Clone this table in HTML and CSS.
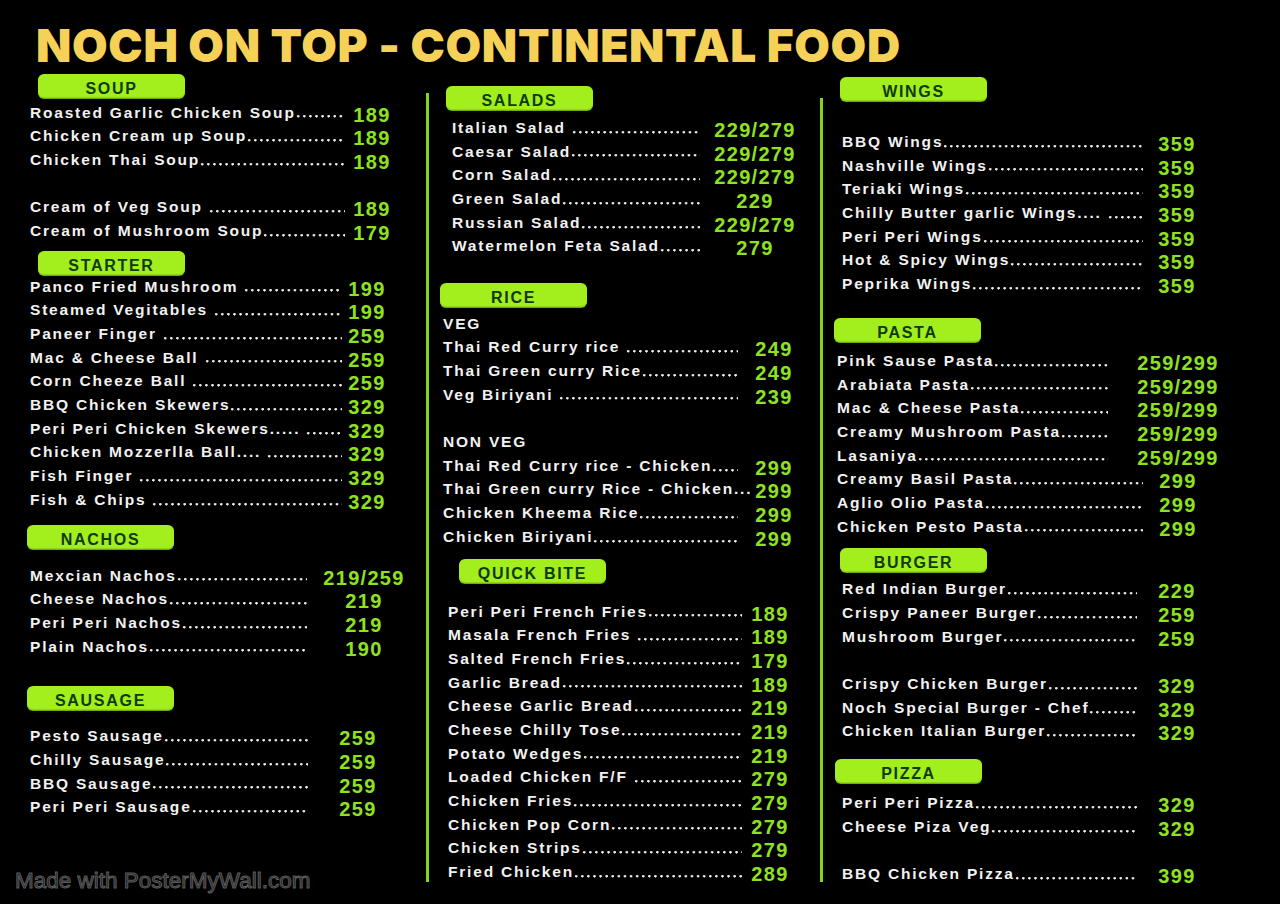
FILE: index.html
```html
<!DOCTYPE html>
<html lang="en">
<head>
<meta charset="utf-8">
<title>Noch On Top - Continental Food</title>
<link rel="stylesheet" href="styles.css">
</head>
<body>
<div class="poster">
  <h1 class="title">NOCH ON TOP - CONTINENTAL FOOD</h1>
  <div class="cols">
    <div class="col col1">
      <div class="pill p-soup">SOUP</div>
      <div class="sec s-soup">
        <div class="row"><span class="lead"><span class="nm">Roasted Garlic Chicken Soup</span><span class="dots"></span></span><span class="pr">189</span></div>
        <div class="row"><span class="lead"><span class="nm">Chicken Cream up Soup</span><span class="dots"></span></span><span class="pr">189</span></div>
        <div class="row"><span class="lead"><span class="nm">Chicken Thai Soup</span><span class="dots"></span></span><span class="pr">189</span></div>
        <div class="blank"></div>
        <div class="row"><span class="lead"><span class="nm">Cream of Veg Soup </span><span class="dots"></span></span><span class="pr">189</span></div>
        <div class="row"><span class="lead"><span class="nm">Cream of Mushroom Soup</span><span class="dots"></span></span><span class="pr">179</span></div>
      </div>
      <div class="pill p-starter">STARTER</div>
      <div class="sec s-starter">
        <div class="row"><span class="lead"><span class="nm">Panco Fried Mushroom </span><span class="dots"></span></span><span class="pr">199</span></div>
        <div class="row"><span class="lead"><span class="nm">Steamed Vegitables </span><span class="dots"></span></span><span class="pr">199</span></div>
        <div class="row"><span class="lead"><span class="nm">Paneer Finger </span><span class="dots"></span></span><span class="pr">259</span></div>
        <div class="row"><span class="lead"><span class="nm">Mac &amp; Cheese Ball </span><span class="dots"></span></span><span class="pr">259</span></div>
        <div class="row"><span class="lead"><span class="nm">Corn Cheeze Ball </span><span class="dots"></span></span><span class="pr">259</span></div>
        <div class="row"><span class="lead"><span class="nm">BBQ Chicken Skewers</span><span class="dots"></span></span><span class="pr">329</span></div>
        <div class="row"><span class="lead"><span class="nm">Peri Peri Chicken Skewers..... </span><span class="dots"></span></span><span class="pr">329</span></div>
        <div class="row"><span class="lead"><span class="nm">Chicken Mozzerlla Ball.... </span><span class="dots"></span></span><span class="pr">329</span></div>
        <div class="row"><span class="lead"><span class="nm">Fish Finger </span><span class="dots"></span></span><span class="pr">329</span></div>
        <div class="row"><span class="lead"><span class="nm">Fish &amp; Chips </span><span class="dots"></span></span><span class="pr">329</span></div>
      </div>
      <div class="pill p-nachos">NACHOS</div>
      <div class="sec s-nachos">
        <div class="row"><span class="lead"><span class="nm">Mexcian Nachos</span><span class="dots"></span></span><span class="pr">219/259</span></div>
        <div class="row"><span class="lead"><span class="nm">Cheese Nachos</span><span class="dots"></span></span><span class="pr">219</span></div>
        <div class="row"><span class="lead"><span class="nm">Peri Peri Nachos</span><span class="dots"></span></span><span class="pr">219</span></div>
        <div class="row"><span class="lead"><span class="nm">Plain Nachos</span><span class="dots"></span></span><span class="pr">190</span></div>
      </div>
      <div class="pill p-sausage">SAUSAGE</div>
      <div class="sec s-sausage">
        <div class="row"><span class="lead"><span class="nm">Pesto Sausage</span><span class="dots"></span></span><span class="pr">259</span></div>
        <div class="row"><span class="lead"><span class="nm">Chilly Sausage</span><span class="dots"></span></span><span class="pr">259</span></div>
        <div class="row"><span class="lead"><span class="nm">BBQ Sausage</span><span class="dots"></span></span><span class="pr">259</span></div>
        <div class="row"><span class="lead"><span class="nm">Peri Peri Sausage</span><span class="dots"></span></span><span class="pr">259</span></div>
      </div>
    </div>

    <div class="vline vline1"></div>

    <div class="col col2">
      <div class="pill p-salads">SALADS</div>
      <div class="sec s-salads">
        <div class="row"><span class="lead"><span class="nm">Italian Salad </span><span class="dots"></span></span><span class="pr">229/279</span></div>
        <div class="row"><span class="lead"><span class="nm">Caesar Salad</span><span class="dots"></span></span><span class="pr">229/279</span></div>
        <div class="row"><span class="lead"><span class="nm">Corn Salad</span><span class="dots"></span></span><span class="pr">229/279</span></div>
        <div class="row"><span class="lead"><span class="nm">Green Salad</span><span class="dots"></span></span><span class="pr">229</span></div>
        <div class="row"><span class="lead"><span class="nm">Russian Salad</span><span class="dots"></span></span><span class="pr">229/279</span></div>
        <div class="row"><span class="lead"><span class="nm">Watermelon Feta Salad</span><span class="dots"></span></span><span class="pr">279</span></div>
      </div>
      <div class="pill p-rice">RICE</div>
      <div class="sec s-rice">
        <div class="row"><span class="nm">VEG</span></div>
        <div class="row"><span class="lead"><span class="nm">Thai Red Curry rice </span><span class="dots"></span></span><span class="pr">249</span></div>
        <div class="row"><span class="lead"><span class="nm">Thai Green curry Rice</span><span class="dots"></span></span><span class="pr">249</span></div>
        <div class="row"><span class="lead"><span class="nm">Veg Biriyani </span><span class="dots"></span></span><span class="pr">239</span></div>
        <div class="blank"></div>
        <div class="row"><span class="nm">NON VEG</span></div>
        <div class="row"><span class="lead"><span class="nm">Thai Red Curry rice - Chicken</span><span class="dots"></span></span><span class="pr">299</span></div>
        <div class="row"><span class="lead"><span class="nm">Thai Green curry Rice - Chicken...</span></span><span class="pr">299</span></div>
        <div class="row"><span class="lead"><span class="nm">Chicken Kheema Rice</span><span class="dots"></span></span><span class="pr">299</span></div>
        <div class="row"><span class="lead"><span class="nm">Chicken Biriyani</span><span class="dots"></span></span><span class="pr">299</span></div>
      </div>
      <div class="pill p-quick">QUICK BITE</div>
      <div class="sec s-quick">
        <div class="row"><span class="lead"><span class="nm">Peri Peri French Fries</span><span class="dots"></span></span><span class="pr">189</span></div>
        <div class="row"><span class="lead"><span class="nm">Masala French Fries </span><span class="dots"></span></span><span class="pr">189</span></div>
        <div class="row"><span class="lead"><span class="nm">Salted French Fries</span><span class="dots"></span></span><span class="pr">179</span></div>
        <div class="row"><span class="lead"><span class="nm">Garlic Bread</span><span class="dots"></span></span><span class="pr">189</span></div>
        <div class="row"><span class="lead"><span class="nm">Cheese Garlic Bread</span><span class="dots"></span></span><span class="pr">219</span></div>
        <div class="row"><span class="lead"><span class="nm">Cheese Chilly Tose</span><span class="dots"></span></span><span class="pr">219</span></div>
        <div class="row"><span class="lead"><span class="nm">Potato Wedges</span><span class="dots"></span></span><span class="pr">219</span></div>
        <div class="row"><span class="lead"><span class="nm">Loaded Chicken F/F </span><span class="dots"></span></span><span class="pr">279</span></div>
        <div class="row"><span class="lead"><span class="nm">Chicken Fries</span><span class="dots"></span></span><span class="pr">279</span></div>
        <div class="row"><span class="lead"><span class="nm">Chicken Pop Corn</span><span class="dots"></span></span><span class="pr">279</span></div>
        <div class="row"><span class="lead"><span class="nm">Chicken Strips</span><span class="dots"></span></span><span class="pr">279</span></div>
        <div class="row"><span class="lead"><span class="nm">Fried Chicken</span><span class="dots"></span></span><span class="pr">289</span></div>
      </div>
    </div>

    <div class="vline vline2"></div>

    <div class="col col3">
      <div class="pill p-wings">WINGS</div>
      <div class="sec s-wings">
        <div class="row"><span class="lead"><span class="nm">BBQ Wings</span><span class="dots"></span></span><span class="pr">359</span></div>
        <div class="row"><span class="lead"><span class="nm">Nashville Wings</span><span class="dots"></span></span><span class="pr">359</span></div>
        <div class="row"><span class="lead"><span class="nm">Teriaki Wings</span><span class="dots"></span></span><span class="pr">359</span></div>
        <div class="row"><span class="lead"><span class="nm">Chilly Butter garlic Wings.... </span><span class="dots"></span></span><span class="pr">359</span></div>
        <div class="row"><span class="lead"><span class="nm">Peri Peri Wings</span><span class="dots"></span></span><span class="pr">359</span></div>
        <div class="row"><span class="lead"><span class="nm">Hot &amp; Spicy Wings</span><span class="dots"></span></span><span class="pr">359</span></div>
        <div class="row"><span class="lead"><span class="nm">Peprika Wings</span><span class="dots"></span></span><span class="pr">359</span></div>
      </div>
      <div class="pill p-pasta">PASTA</div>
      <div class="sec s-pasta">
        <div class="row"><span class="lead"><span class="nm">Pink Sause Pasta</span><span class="dots"></span></span><span class="pr">259/299</span></div>
        <div class="row"><span class="lead"><span class="nm">Arabiata Pasta</span><span class="dots"></span></span><span class="pr">259/299</span></div>
        <div class="row"><span class="lead"><span class="nm">Mac &amp; Cheese Pasta</span><span class="dots"></span></span><span class="pr">259/299</span></div>
        <div class="row"><span class="lead"><span class="nm">Creamy Mushroom Pasta</span><span class="dots"></span></span><span class="pr">259/299</span></div>
        <div class="row"><span class="lead"><span class="nm">Lasaniya</span><span class="dots"></span></span><span class="pr">259/299</span></div>
        <div class="row wide"><span class="lead"><span class="nm">Creamy Basil Pasta</span><span class="dots"></span></span><span class="pr">299</span></div>
        <div class="row wide"><span class="lead"><span class="nm">Aglio Olio Pasta</span><span class="dots"></span></span><span class="pr">299</span></div>
        <div class="row wide"><span class="lead"><span class="nm">Chicken Pesto Pasta</span><span class="dots"></span></span><span class="pr">299</span></div>
      </div>
      <div class="pill p-burger">BURGER</div>
      <div class="sec s-burger">
        <div class="row"><span class="lead"><span class="nm">Red Indian Burger</span><span class="dots"></span></span><span class="pr">229</span></div>
        <div class="row"><span class="lead"><span class="nm">Crispy Paneer Burger</span><span class="dots"></span></span><span class="pr">259</span></div>
        <div class="row"><span class="lead"><span class="nm">Mushroom Burger</span><span class="dots"></span></span><span class="pr">259</span></div>
        <div class="blank"></div>
        <div class="row"><span class="lead"><span class="nm">Crispy Chicken Burger</span><span class="dots"></span></span><span class="pr">329</span></div>
        <div class="row"><span class="lead"><span class="nm">Noch Special Burger - Chef</span><span class="dots"></span></span><span class="pr">329</span></div>
        <div class="row"><span class="lead"><span class="nm">Chicken Italian Burger</span><span class="dots"></span></span><span class="pr">329</span></div>
      </div>
      <div class="pill p-pizza">PIZZA</div>
      <div class="sec s-pizza">
        <div class="row"><span class="lead"><span class="nm">Peri Peri Pizza</span><span class="dots"></span></span><span class="pr">329</span></div>
        <div class="row"><span class="lead"><span class="nm">Cheese Piza Veg</span><span class="dots"></span></span><span class="pr">329</span></div>
        <div class="blank"></div>
        <div class="row"><span class="lead"><span class="nm">BBQ Chicken Pizza</span><span class="dots"></span></span><span class="pr">399</span></div>
      </div>
    </div>
  </div>
  <div class="watermark">Made with PosterMyWall.com</div>
</div>
</body>
</html>
```
FILE: styles.css
```css
* { box-sizing: border-box; }
html, body { margin: 0; padding: 0; background: #000; }
body { width: 1280px; height: 904px; overflow: hidden; }

.poster {
  position: relative;
  width: 1280px;
  height: 904px;
  background: #000;
  font-family: "Liberation Sans", Arial, sans-serif;
}

.title {
  margin: 0;
  padding: 22px 0 0 36px;
  font-family: "Inter", "Noto Sans", sans-serif;
  font-weight: 900;
  font-size: 46px;
  line-height: 46px;
  color: #f6d157;
  letter-spacing: 0.65px;
  white-space: nowrap;
}

.cols {
  margin-top: 6px;
  display: grid;
  grid-template-columns: 426px 3px 391px 3px 1fr;
  align-items: start;
}

.col { display: flex; flex-direction: column; align-items: flex-start; }

.vline { background: #86d41f; }
.vline1 { margin-top: 19px; height: 789px; }
.vline2 { margin-top: 24px; height: 784px; }

.pill {
  width: 147px;
  height: 24px;
  padding-top: 5px;
  border-radius: 6px;
  background: #a3ee1d;
  box-shadow: 0 1px 0 #6fae12, inset 0 -1px 0 #8fd516;
  color: #0f3a0c;
  font-weight: 700;
  font-size: 16px;
  line-height: 19px;
  letter-spacing: 1.7px;
  text-align: center;
}

.sec { width: 100%; }

.row {
  display: flex;
  align-items: flex-start;
  height: 23.7px;
}
.blank { height: 23.7px; }

.lead {
  display: flex;
  min-width: var(--lw);
  width: var(--lw);
}
.nm {
  flex: none;
  white-space: pre;
  color: #f2f2f2;
  font-weight: 700;
  font-size: 15.5px;
  line-height: 23.7px;
  letter-spacing: 1.8px;
}
/* dotted leader drawn as a repeating dot pattern on the baseline */
.dots {
  flex: 1 1 auto;
  min-width: 0;
  height: 23.7px;
  background-image: radial-gradient(circle at 2.2px 1.3px, #ececec 0, #ececec 1.05px, rgba(236,236,236,0) 1.5px);
  background-size: 6.1px 3px;
  background-repeat: repeat-x;
  background-position: 0 14.8px;
}
.pr {
  flex: none;
  width: var(--pw);
  margin-top: 5px;
  text-align: center;
  color: #8fe21f;
  font-family: "Liberation Sans", Arial, sans-serif;
  font-weight: 700;
  font-size: 20px;
  line-height: 19px;
  letter-spacing: 1.3px;
  white-space: nowrap;
}

/* column 1 */
.p-soup { margin-left: 38px; }
.s-soup { margin-top: 2.5px; padding-left: 30px; --lw: 315px; --pw: 54px; }
.p-starter { margin-top: 8px; margin-left: 38px; }
.s-starter { margin-top: 0; padding-left: 30px; --lw: 312px; --pw: 50px; }
.p-nachos { margin-top: 13px; margin-left: 27px; }
.s-nachos { margin-top: 15px; padding-left: 30px; --lw: 277px; --pw: 114px; }
.p-sausage { margin-top: 28px; margin-left: 27px; }
.s-sausage { margin-top: 14px; padding-left: 30px; --lw: 278px; --pw: 100px; }

/* column 2 */
.p-salads { margin-top: 12px; margin-left: 17px; }
.s-salads { margin-top: 6px; padding-left: 23px; --lw: 248px; --pw: 110px; }
.p-rice { margin-top: 24.5px; margin-left: 11px; }
.s-rice { margin-top: 5px; padding-left: 14px; --lw: 295px; --pw: 72px; }
.p-quick { margin-top: 10px; margin-left: 30px; }
.s-quick { margin-top: 17px; padding-left: 19px; --lw: 294px; --pw: 56px; }

/* column 3 */
.p-wings { margin-top: 3px; margin-left: 17px; }
.s-wings { margin-top: 29px; padding-left: 19px; --lw: 301px; --pw: 68px; }
.p-pasta { margin-top: 22px; margin-left: 11px; }
.s-pasta { margin-top: 7px; padding-left: 14px; --lw: 271px; --pw: 140px; }
.s-pasta .row.wide { --lw: 306px; --pw: 70px; }
.p-burger { margin-top: 10px; margin-left: 17px; }
.s-burger { margin-top: 5px; padding-left: 19px; --lw: 295px; --pw: 80px; }
.p-pizza { margin-top: 16px; margin-left: 12px; }
.s-pizza { margin-top: 8px; padding-left: 19px; --lw: 295px; --pw: 80px; }

.watermark {
  position: absolute;
  left: 15px;
  top: 870px;
  font-family: "Liberation Sans", Arial, sans-serif;
  font-size: 22.5px;
  line-height: 1;
  color: #1e1e1e;
  -webkit-text-stroke: 1px #5c5c5c;
  white-space: nowrap;
}
```
